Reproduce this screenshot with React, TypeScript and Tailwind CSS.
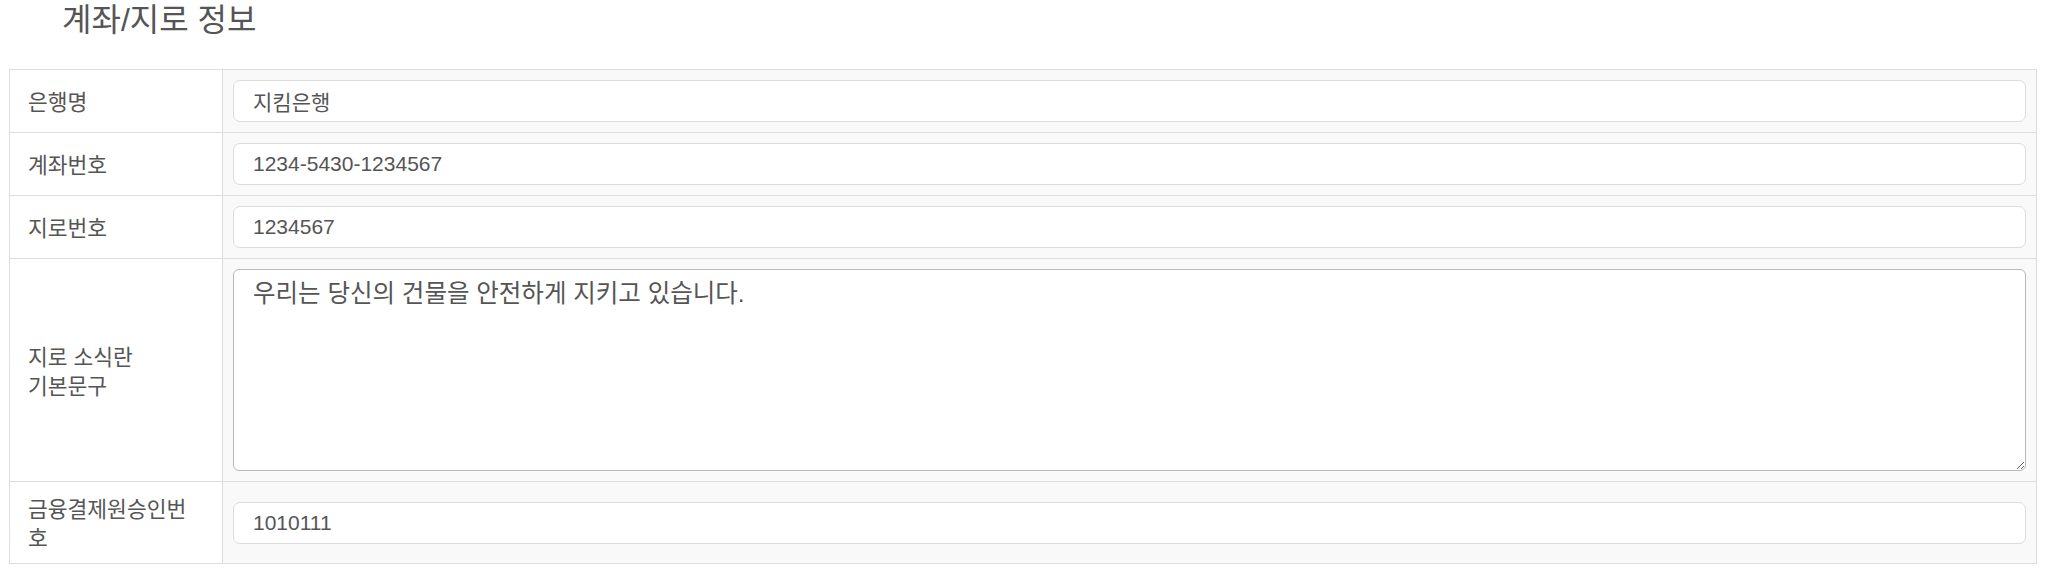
import React, { FC } from 'react';

const font = 'font-["Liberation_Sans","Noto_Sans_CJK_KR",sans-serif]';

interface RowProps {
  label: React.ReactNode;
  children: React.ReactNode;
  last?: boolean;
}

const Row: FC<RowProps> = ({ label, children, last }) => {
  return (
    <div className={`flex ${last ? '' : 'border-b border-[#dddddd]'}`}>
      <div className="flex w-[213px] shrink-0 items-center border-r border-[#dddddd] bg-white pt-[14px] pb-[9px] pl-[18px] pr-[24px] text-[21.5px] leading-[29px] text-[#555555]">
        <span>{label}</span>
      </div>
      <div className="flex flex-1 items-center bg-[#f9f9f9] p-[10px]">{children}</div>
    </div>
  );
};

const TextInput: FC<{ value: string }> = ({ value }) => {
  return (
    <input
      type="text"
      defaultValue={value}
      className={`h-[42px] w-full rounded-[7px] border border-[#dcdcdc] bg-white pl-[19px] pr-3 text-[21px] text-[#555555] outline-none ${font}`}
    />
  );
};

const App: FC = () => {
  return (
    <div className={`min-h-[572px] bg-white ${font}`}>
      <h2 className="h-[40px] pl-[62px] text-[32px] leading-[40px] font-normal text-[#555555]">
        계좌/지로 정보
      </h2>
      <div className="mt-[29px] ml-[9px] mr-[11px] border border-[#dddddd]">
        <Row label="은행명">
          <TextInput value="지킴은행" />
        </Row>
        <Row label="계좌번호">
          <TextInput value="1234-5430-1234567" />
        </Row>
        <Row label="지로번호">
          <TextInput value="1234567" />
        </Row>
        <Row
          label={
            <>
              지로 소식란
              <br />
              기본문구
            </>
          }>
          <textarea
            defaultValue="우리는 당신의 건물을 안전하게 지키고 있습니다."
            className={`h-[202px] w-full rounded-[6px] border border-[#b8b8b8] bg-white px-[19px] pt-[8px] text-[24.5px] leading-[32px] text-[#555555] outline-none ${font}`}
          />
        </Row>
        <Row label="금융결제원승인번호" last>
          <TextInput value="1010111" />
        </Row>
      </div>
    </div>
  );
};

export default App;
